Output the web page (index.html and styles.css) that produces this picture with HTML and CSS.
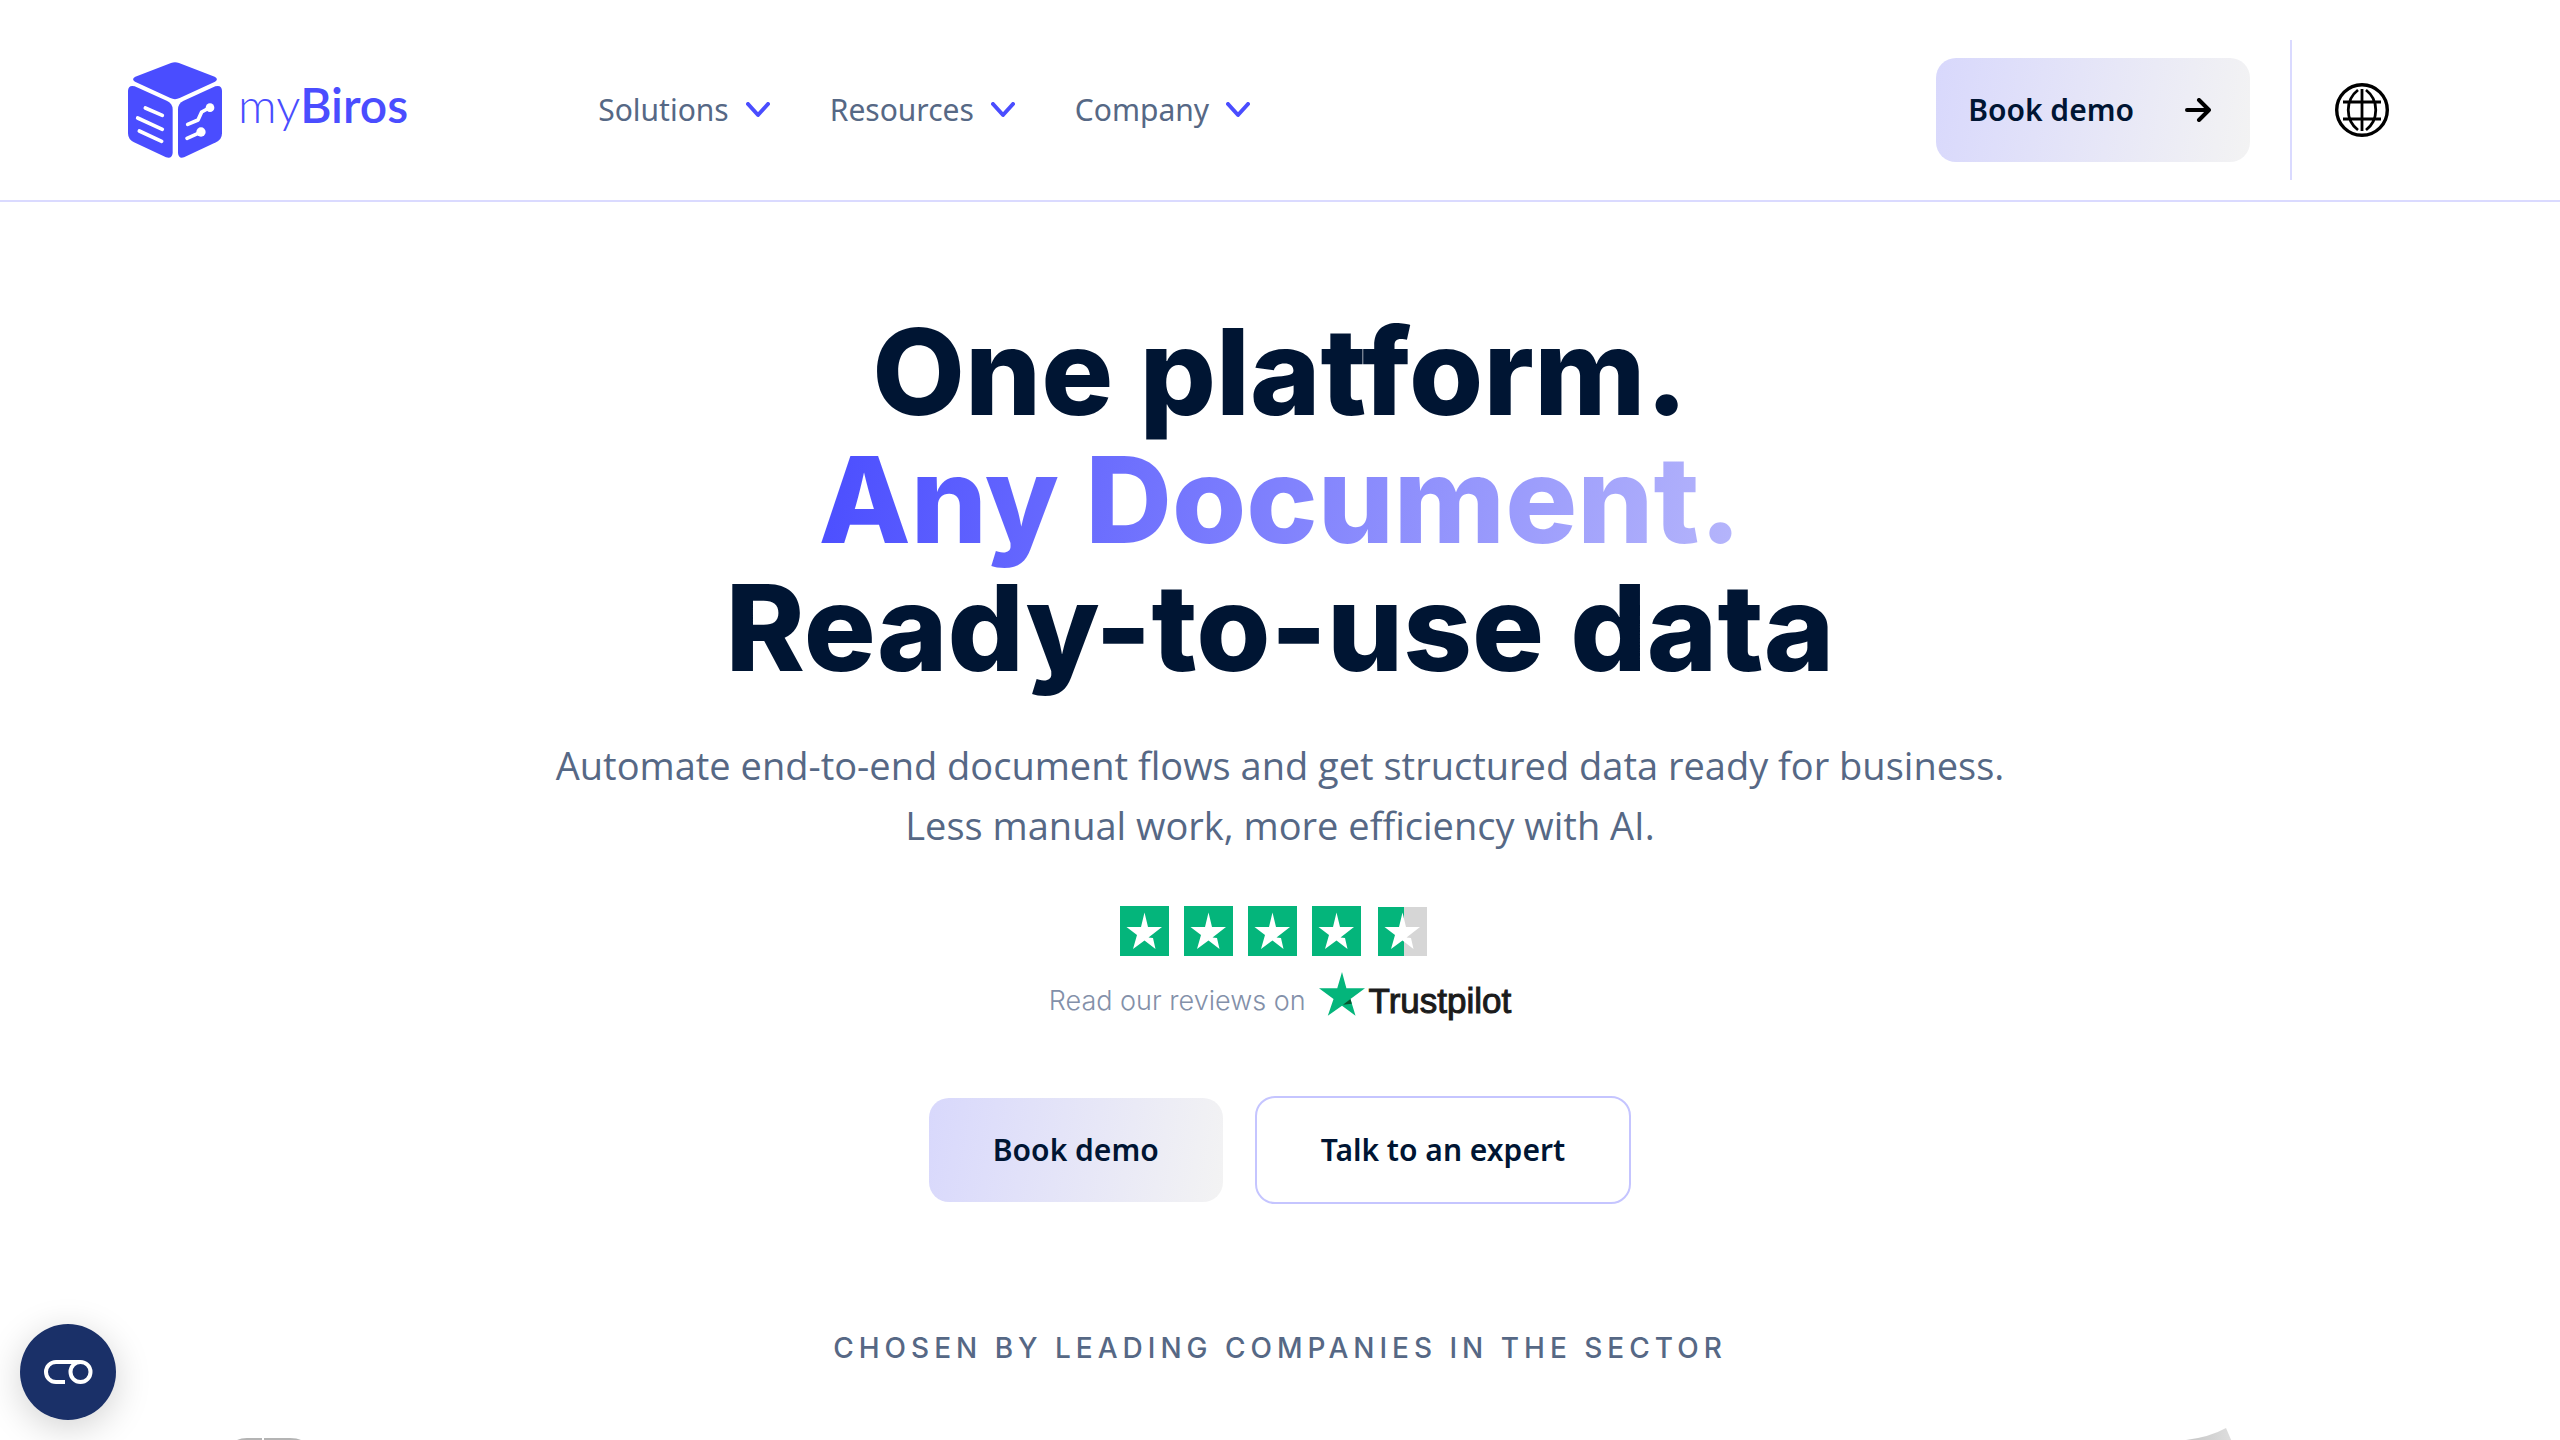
FILE: index.html
```html
<!DOCTYPE html>
<html lang="en">
<head>
<meta charset="utf-8">
<meta name="viewport" content="width=device-width, initial-scale=1">
<title>myBiros</title>
<link rel="stylesheet" href="styles.css">
</head>
<body>
<header class="header">
  <a class="logo" href="#" aria-label="myBiros home">
    <svg class="logo-mark" viewBox="54 66 282 288" aria-hidden="true">
      <g fill="#4a4dff">
        <path d="M183 69Q195 64 207 69L314 110Q327 117 315 125L209 174Q195 181 181 174L75 125Q63 117 76 110Z"/>
        <path d="M54 152Q55 134 74 139L170 182Q188 190 188 208V339Q186 358 168 352L72 307Q54 298 54 280Z"/>
        <path d="M336 152Q335 134 316 139L221 182Q204 190 204 208V339Q206 358 222 352L318 307Q336 298 336 280Z"/>
      </g>
      <g fill="none" stroke="#fff" stroke-width="11" stroke-linecap="round" stroke-linejoin="round">
        <path d="M106 204l51 22M83 234l74 34M88 273l67 31M233 253l31-13 11-24 22-12M231 295l40-18"/>
      </g>
      <circle cx="300" cy="203" r="13" fill="#fff"/>
      <circle cx="273" cy="276" r="14" fill="#fff"/>
    </svg>
    <span class="logo-text"><span class="logo-my">my</span>Biros</span>
  </a>
  <nav class="nav" aria-label="Main">
    <button class="nav-item" type="button">Solutions
      <svg class="chevron" viewBox="0 0 24 16" aria-hidden="true"><path d="M2 2l10 11L22 2"/></svg>
    </button>
    <button class="nav-item" type="button">Resources
      <svg class="chevron" viewBox="0 0 24 16" aria-hidden="true"><path d="M2 2l10 11L22 2"/></svg>
    </button>
    <button class="nav-item" type="button">Company
      <svg class="chevron" viewBox="0 0 24 16" aria-hidden="true"><path d="M2 2l10 11L22 2"/></svg>
    </button>
  </nav>
  <div class="header-actions">
    <button class="btn btn-primary btn-arrow" type="button">Book demo
      <svg class="arrow" viewBox="0 0 26 24" aria-hidden="true"><path d="M2 12h22M14 2l10 10-10 10"/></svg>
    </button>
    <div class="lang-wrap">
      <button class="lang" type="button" aria-label="Change language">
        <svg class="globe" viewBox="0 0 54 54" aria-hidden="true">
          <circle cx="27" cy="27" r="25.3" stroke-width="3.4"/>
          <path stroke-width="2.8" d="M27 6v42M8 19h38M8 36h38M23 7C10 17 10 37 23 47M31 7c13 10 13 30 0 40"/>
        </svg>
      </button>
    </div>
  </div>
</header>
<main class="hero">
  <h1 class="title">One platform.<br><span class="title-accent">Any Document.</span><br>Ready-to-use data</h1>
  <p class="subtitle">Automate end-to-end document flows and get structured data ready for business.<br>Less manual work, more efficiency with AI.</p>
  <a class="reviews" href="#">
    <svg class="stars" viewBox="0 0 308 50" role="img" aria-label="4.5 out of 5 stars">
      <defs><path id="star" d="M24.500 6.500L28 21H42L28.500 31.500 33 32 35.500 43 24.500 34.500 13 43 17 29 6.500 21H21Z"/></defs>
      <g fill="#04b57b"><path d="M0 0h49v50H0zM64 0h49v50H64zM128 0h49v50h-49zM192 0h49v50h-49zM258 1h26v49h-26z"/></g>
      <path fill="#d6d6d6" d="M284 1h23v49h-23z"/>
      <g fill="#fff"><use href="#star"/><use href="#star" x="64"/><use href="#star" x="128"/><use href="#star" x="192"/><use href="#star" x="258"/></g>
    </svg>
    <span class="reviews-row">
      <span class="reviews-text">Read our reviews on</span>
      <span class="trustpilot">
        <svg class="tp-star" viewBox="32 38 136 130" aria-hidden="true"><path fill="#04b57b" d="M100 38l13 48h55l-43 32 15 49-40-29-42 29 17-49-43-32h54z"/><path fill="#07552f" d="M125 118l4 14-26 3z"/></svg>
        <span class="tp-name">Trustpilot</span>
      </span>
    </span>
  </a>
  <div class="cta">
    <button class="btn btn-primary" type="button">Book demo</button>
    <button class="btn btn-outline" type="button">Talk to an expert</button>
  </div>
  <h2 class="chosen">Chosen by leading companies in the sector</h2>
  <div class="partners">
    <svg class="partner" viewBox="0 0 66 80" aria-hidden="true"><path fill="#b4b4b4" d="M1 12q4-2 10-2h15v60H1zM28 10h26q7 0 11 2v58H28z"/></svg>
    <svg class="partner" viewBox="0 0 66 80" aria-hidden="true"><defs><linearGradient id="fold"><stop offset="0" stop-color="#bbb"/><stop offset="1" stop-color="#dedede"/></linearGradient></defs><path fill="url(#fold)" d="M20 12Q44 9 60 0L66 14 60 60H0Z"/></svg>
  </div>
</main>
<button class="cookie" type="button" aria-label="Cookie preferences">
  <svg class="cookie-icon" viewBox="0 0 49 24" aria-hidden="true"><path d="M21 22h-9a10 10 0 0 1 0-20h24"/><circle cx="36.500" cy="12" r="10"/></svg>
</button>
</body>
</html>
```
FILE: styles.css
```css
* { box-sizing: border-box; }

body {
  margin: 0;
  min-height: 100vh;
  display: flex;
  flex-direction: column;
  background: #fff;
  color: #001533;
  font-family: "Noto Sans", "Open Sans", sans-serif;
  font-size: 30px;
}

button {
  font: inherit;
  color: inherit;
  border: 0;
  background: none;
  padding: 0;
  cursor: pointer;
}

a { color: inherit; text-decoration: none; }
svg { display: block; flex: none; }

.header {
  display: flex;
  align-items: center;
  padding: 40px 128px 20px;
  border-bottom: 2px solid #dadaff;
}

.logo {
  display: flex;
  align-items: center;
  gap: 16px;
  margin-right: 190px;
  color: #4a4dff;
}
.logo-mark { width: 94px; height: 96px; }
.logo-text {
  padding-bottom: 10px;
  font-family: Lato, sans-serif;
  font-size: 48px;
  font-weight: 600;
  line-height: 56px;
}
.logo-my { font-weight: 300; }

.nav { display: flex; gap: 60px; }
.nav-item {
  display: flex;
  align-items: center;
  gap: 17px;
  color: #566885;
  line-height: 40px;
}
.chevron {
  width: 24px;
  height: 16px;
  fill: none;
  stroke: #4a4dff;
  stroke-width: 4;
  stroke-linecap: round;
  stroke-linejoin: round;
}

.header-actions {
  display: flex;
  align-items: center;
  gap: 40px;
  margin-left: auto;
}

.btn {
  padding: 32px 64px;
  border-radius: 20px;
  font-weight: 600;
  line-height: 40px;
}
.btn-primary { background: linear-gradient(100deg, #d8d8fc, #f3f3f3); }
.btn-outline { border: 2px solid #c5c5ff; }
.btn-arrow {
  display: flex;
  align-items: center;
  gap: 51px;
  padding: 32px 39px 32px 32px;
}
.arrow {
  width: 26px;
  height: 24px;
  fill: none;
  stroke: #000;
  stroke-width: 4;
  stroke-linecap: round;
  stroke-linejoin: round;
}

.lang-wrap {
  display: flex;
  align-items: center;
  height: 140px;
  padding: 0 43px;
  border-left: 2px solid #dadaff;
}
.globe { width: 54px; height: 54px; fill: none; stroke: #000; }

.hero {
  flex: 1;
  display: flex;
  flex-direction: column;
  align-items: center;
  padding-top: 106px;
  text-align: center;
}

.title {
  margin: 0;
  font-family: Inter, sans-serif;
  font-size: 120px;
  font-weight: 800;
  line-height: 128px;
}
.title-accent {
  background: linear-gradient(100deg, #4a4dff, #b6b6fb);
  -webkit-background-clip: text;
  background-clip: text;
  color: transparent;
}

.subtitle {
  margin: 43px 0 0;
  color: #566885;
  font-family: "Open Sans", "Noto Sans", sans-serif;
  font-size: 38px;
  line-height: 60px;
}

.reviews {
  display: flex;
  flex-direction: column;
  align-items: center;
  gap: 16px;
  margin-top: 51px;
}
.stars { width: 308px; height: 50px; margin-right: 12px; }
.reviews-row {
  display: flex;
  gap: 13px;
  font-family: Inter, sans-serif;
  line-height: 30px;
}
.reviews-text {
  padding-top: 14px;
  color: #8390a9;
  font-size: 27px;
  font-weight: 300;
}
.trustpilot {
  display: flex;
  gap: 4px;
}
.tp-name {
  padding-top: 14px;
  color: #1b1b1b;
  font-family: "Liberation Sans", Arial, sans-serif;
  font-size: 35px;
  -webkit-text-stroke: 1px #1b1b1b;
}
.tp-star { width: 46px; height: 44px; }

.cta {
  display: flex;
  align-items: center;
  gap: 32px;
  margin-top: 80px;
}

.chosen {
  margin: 124px 0 60px;
  color: #566885;
  font-family: Inter, sans-serif;
  font-size: 28px;
  font-weight: 500;
  line-height: 40px;
  letter-spacing: 5px;
  text-transform: uppercase;
}

.partners {
  align-self: stretch;
  flex: 1 1 0;
  min-height: 0;
  display: flex;
  justify-content: space-between;
  padding: 0 328px 0 236px;
  overflow: hidden;
}
.partner { width: 66px; height: 80px; margin-bottom: -80px; }

.cookie {
  position: fixed;
  left: 20px;
  bottom: 20px;
  display: grid;
  place-items: center;
  width: 96px;
  height: 96px;
  border-radius: 50%;
  background: #1a3068;
  box-shadow: 0 8px 36px rgba(0, 0, 0, 0.18);
}
.cookie-icon {
  width: 49px;
  height: 24px;
  fill: none;
  stroke: #fff;
  stroke-width: 4;
}
```
